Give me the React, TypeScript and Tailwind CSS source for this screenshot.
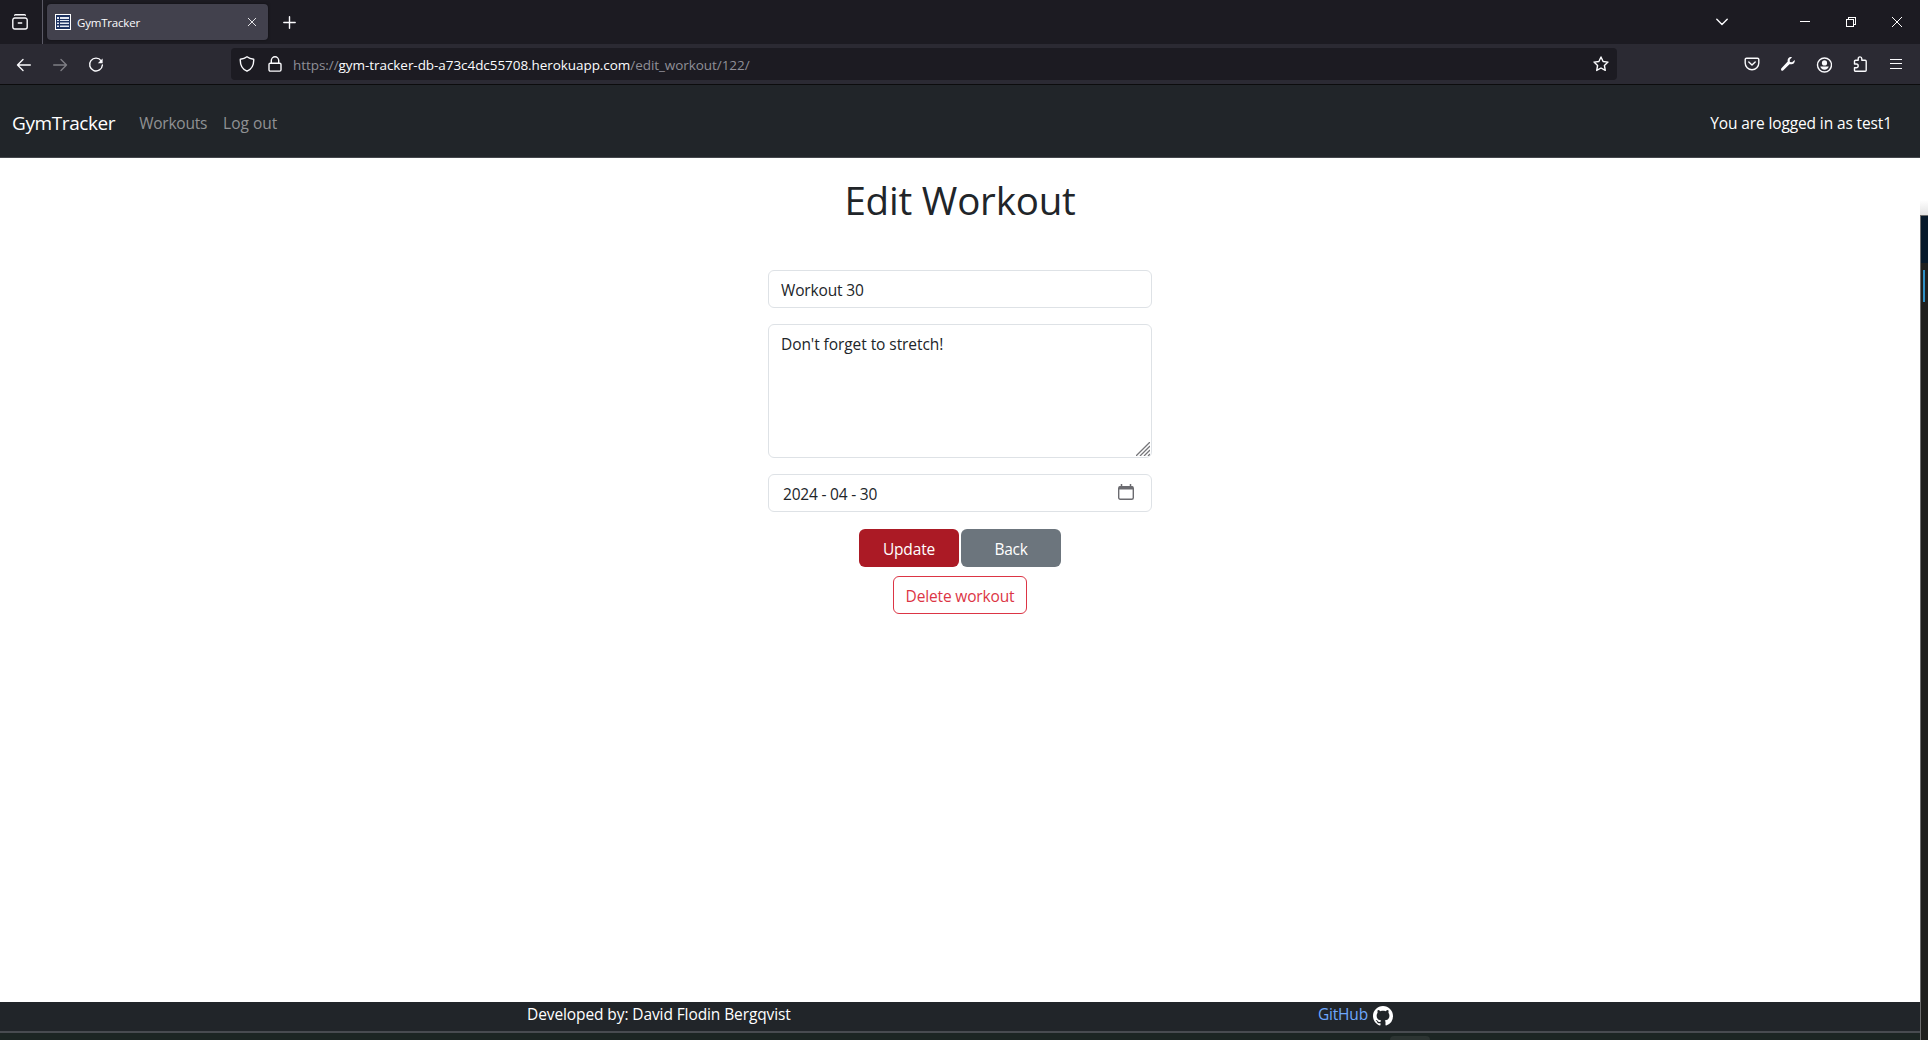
import React from "react";

const stroke = { fill: "none", stroke: "#fbfbfe", strokeWidth: 1.4, strokeLinecap: "round" as const, strokeLinejoin: "round" as const };

function Icon({ children, className = "", size = 16 }: { children: React.ReactNode; className?: string; size?: number }) {
  return (
    <svg width={size} height={size} viewBox="0 0 16 16" className={"block shrink-0 " + className} {...stroke}>
      {children}
    </svg>
  );
}

function TabBar() {
  return (
    <div className="flex h-11 bg-[#1c1b22]">
      <div className="flex w-[43px] items-center border-r border-[#5b5a66] pl-3">
        <Icon>
          <path d="M2.7 1.2Q3 .8 3.6.8h8.8q.6 0 .9.4" />
          <path d="M3 4h10a2 2 0 0 1 2.2 2v7a2 2 0 0 1-2 2H2.8a2 2 0 0 1-2-2V6A2 2 0 0 1 3 4zM6.3 9h3.4" />
        </Icon>
      </div>
      <div className="ml-1 mt-1 flex h-9 w-[221px] items-center rounded bg-[#42414d] pl-2 pr-2.5 shadow-[0_0_3px_rgba(0,0,0,0.5)]">
        <svg width="16" height="16" viewBox="0 0 16 16" className="block">
          <path d="M0 0h16v16H0z" fill="#fff" />
          <path d="M1 1h14v14H1z" fill="#1d3260" />
          <path d="M2 3h2v2H2zM2 6h2v1H2zM2 8.500h2v1.500H2zM2 11.500h2v1.500H2zM5 3h9v2H5zM5 6h9v1H5zM5 8.500h9v1.500H5zM5 11.500h9v1.500H5z" fill="#e3e8f2" />
        </svg>
        <span className="ml-1.5 pt-px text-[11.500px] tracking-[-0.2px] text-[#fbfbfe]">GymTracker</span>
        <Icon size={10} className="ml-auto mr-px"><path d="M2 2l12 12M14 2L2 14" /></Icon>
      </div>
      <div className="ml-[15px] flex items-center pt-px">
        <svg width="13" height="13" viewBox="0 0 13 13" {...stroke}><path d="M6.500.8v11.400M.8 6.500h11.400" /></svg>
      </div>
      <div className="ml-auto flex items-center pr-[18px]">
        <svg width="12" height="8" viewBox="0 0 12 8" className="mr-[72px]" {...stroke}><path d="M.8 1.200L6 6.400l5.200-5.200" /></svg>
        <svg width="10" height="10" viewBox="0 0 10 10" shapeRendering="crispEdges"><path d="M0 4h10v1H0z" fill="#fff" /></svg>
        <svg width="10" height="10" viewBox="0 0 10 10" className="ml-9" fill="none" stroke="#fff" shapeRendering="crispEdges"><path d="M.5 2.500h7v7h-7zM2.500 2.500v-2h7v7h-2" /></svg>
        <svg width="10" height="10" viewBox="0 0 10 10" className="ml-9" stroke="#fff"><path d="M0 0l10 10M10 0L0 10" /></svg>
      </div>
    </div>
  );
}

function Toolbar() {
  return (
    <div className="flex h-[41px] items-center border-b border-[#0c0c0d] bg-[#2b2a33]">
      <Icon className="ml-4 mt-px"><path d="M14.300 8H1.500M7 2.500L1.500 8L7 13.500" /></Icon>
      <Icon className="ml-5 mt-px opacity-40"><path d="M1.700 8h12.800M9 2.500L14.500 8L9 13.500" /></Icon>
      <Icon className="ml-5 mt-px">
        <path d="M13.200 3.800A6.400 6.400 0 1 0 14.400 8" />
        <path d="M14.600 1.500v4.800H9.800z" fill="#fbfbfe" stroke="none" />
      </Icon>
      <div className="ml-[127px] flex h-8 w-[1386px] items-center rounded bg-[#1c1b22]">
        <Icon className="ml-2"><path d="M8 .8C6 2.300 3.800 2.900 1.300 3.200C1 9 3.200 13.200 8 15.200C12.800 13.200 15 9 14.700 3.200C12.200 2.900 10 2.300 8 .8z" /></Icon>
        <Icon className="ml-3"><path d="M3.300 7.200h9.400a1.300 1.300 0 0 1 1.300 1.300v5.300a1.300 1.300 0 0 1-1.300 1.300H3.300A1.300 1.300 0 0 1 2 13.800V8.500a1.300 1.300 0 0 1 1.300-1.300zM4.300 7V4.500a3.700 3.700 0 0 1 7.400 0V7" /></Icon>
        <span className="ml-[10px] whitespace-nowrap pt-0.5 text-[13.500px] tracking-[-0.06px] text-[#8f8f97]">
          https://<span className="text-[#fbfbfe]">gym-tracker-db-a73c4dc55708.herokuapp.com</span>/edit_workout/122/
        </span>
        <Icon className="ml-auto mr-2"><path d="M8 1l2.100 4.500 4.900.6-3.600 3.400.9 4.900L8 12l-4.300 2.400.9-4.900L1 6.100l4.900-.6z" /></Icon>
      </div>
      <div className="ml-auto flex items-center gap-5 pr-4">
        <Icon><path d="M2.500 2.200h11a1.300 1.300 0 0 1 1.300 1.300V7a6.800 6.800 0 0 1-13.600 0V3.500a1.300 1.300 0 0 1 1.300-1.300zM4.800 6L8 9l3.200-3" /></Icon>
        <Icon><path d="M14.700 3.900l-2.600 2.300-2.200-.2-.2-2.300 2.300-2.500C9.500.5 7.100 2.400 7.700 5.600L1.200 12.600q-.5 1 .2 1.800.8.600 1.700 0L9.500 8.200c3.300.8 5.700-1.500 5.200-4.300z" fill="#fbfbfe" stroke="none" /></Icon>
        <Icon className="mt-px">
          <circle cx="8.500" cy="8" r="7" />
          <circle cx="8.500" cy="5.900" r="2.600" fill="#fbfbfe" stroke="none" />
          <path d="M4.300 9.600h8.400c-.4 2-2 3.200-4.200 3.200s-3.800-1.200-4.200-3.200z" fill="#fbfbfe" stroke="none" />
        </Icon>
        <Icon><path d="M2.500 8V5.200a1 1 0 0 1 1-1h2.700V2.700a1.800 1.800 0 0 1 3.600 0v1.500h3.400a1 1 0 0 1 1 1v9a1 1 0 0 1-1 1H3.500a1 1 0 0 1-1-1v-2.400h1.800a1.800 1.800 0 0 0 0-3.800z" /></Icon>
        <svg width="16" height="16" viewBox="0 0 16 16" shapeRendering="crispEdges" fill="#fbfbfe"><path d="M2 3h12v1H2zM2 7h12v1H2zM2 12h12v1H2z" /></svg>
      </div>
    </div>
  );
}

function SiteNav() {
  return (
    <nav className="flex h-[73px] items-center border-b border-[#44474c] bg-[#212529] pl-3 pr-7 pt-1 text-[15.500px]">
      <span className="text-[19px] tracking-[-0.4px] text-white">GymTracker</span>
      <span className="ml-6 pt-0.5 tracking-[-0.25px] text-[#909294]">Workouts</span>
      <span className="ml-4 pt-0.5 tracking-[0px] text-[#909294]">Log out</span>
      <span className="ml-auto pt-0.5 tracking-[-0.12px] text-white">You are logged in as test1</span>
    </nav>
  );
}

function EditForm() {
  return (
    <main className="flex flex-1 flex-col items-center bg-white text-[15.500px] text-[#212529]">
      <h1 className="mt-[18px] h-12 text-[38.500px] leading-[48px] tracking-[-0.2px]">Edit Workout</h1>
      <form className="mt-[46px] flex w-96 flex-col gap-4">
        <div className="flex h-[38px] items-center rounded-md border border-[#dee2e6] px-3 pt-1 tracking-[-0.15px]">Workout 30</div>
        <div className="relative h-[134px] rounded-md border border-[#dee2e6] px-3 pt-2 tracking-[-0.07px]">
          Don't forget to stretch!
          <svg width="14" height="14" viewBox="0 0 14 14" className="absolute bottom-px right-px" stroke="#76767a" strokeWidth="1.300"><path d="M0 14L14 0M4 14L14 4M8 14l6-6M12 14l2-2" /></svg>
        </div>
        <div className="flex h-[38px] items-center rounded-md border border-[#dee2e6] pl-3.5 pr-[17px]">
          <span className="pt-1 tracking-[-0.2px]">2024 - 04 - 30</span>
          <svg width="16" height="16" viewBox="0 0 16 16" className="mb-0.5 ml-auto" fill="none" stroke="#6b6b70"><rect x=".7" y="2.700" width="14.600" height="12.600" rx="1.500" strokeWidth="1.400" /><path d="M1 4h14" strokeWidth="3" /><path d="M3.500 0v3M12.500 0v3" strokeWidth="1.500" /></svg>
        </div>
      </form>
      <div className="mt-[17px] flex gap-0.5 text-white">
        <span className="flex h-[38px] w-[100px] items-center justify-center rounded-md bg-[#ab1a25] pt-1 tracking-[-0.15px]">Update</span>
        <span className="flex h-[38px] w-[100px] items-center justify-center rounded-md bg-[#6c757d] pt-1 tracking-[-0.25px]">Back</span>
      </div>
      <span className="mt-[9px] flex h-[38px] w-[134px] items-center justify-center rounded-md border border-[#dc3545] pt-1 tracking-[-0.15px] text-[#dc3545]">Delete workout</span>
    </main>
  );
}

function Footer() {
  return (
    <footer className="flex h-[29px] items-center bg-[#212529] text-[15.500px] text-white">
      <span className="ml-[527px] w-[791px] pb-1 tracking-[-0.1px]">Developed by: David Flodin Bergqvist</span>
      <span className="pb-1 tracking-[-0.2px] text-[#6ea8fe]">GitHub</span>
      <svg width="20" height="20" viewBox="0 0 16 16" className="mb-px ml-[5px]" fill="#fff">
        <path d="M8 0C3.580 0 0 3.580 0 8c0 3.540 2.290 6.530 5.470 7.590.4.070.55-.17.55-.38 0-.19-.01-.82-.01-1.490-2.010.37-2.530-.49-2.690-.94-.09-.23-.48-.94-.82-1.130-.28-.15-.68-.52-.01-.53.63-.01 1.080.58 1.230.82.72 1.210 1.870.87 2.330.66.07-.52.28-.87.51-1.070-1.780-.2-3.640-.89-3.640-3.950 0-.87.31-1.590.82-2.150-.08-.2-.36-1.020.08-2.120 0 0 .67-.21 2.200.82.64-.18 1.320-.27 2-.27s1.360.09 2 .27c1.530-1.040 2.200-.82 2.200-.82.44 1.100.16 1.920.08 2.120.51.56.82 1.270.82 2.150 0 3.070-1.870 3.750-3.650 3.950.29.25.54.73.54 1.480 0 1.070-.01 1.930-.01 2.200 0 .21.150.46.550.38A8.010 8.010 0 0 0 16 8c0-4.420-3.580-8-8-8z" />
      </svg>
    </footer>
  );
}

export default function App() {
  return (
    <div className="flex h-[1040px] w-[1928px] overflow-hidden bg-white font-['Open_Sans','Noto_Sans',sans-serif]">
      <div className="flex w-[1920px] shrink-0 flex-col">
        <TabBar />
        <Toolbar />
        <SiteNav />
        <EditForm />
        <Footer />
        <div className="h-[9px] overflow-hidden border-t-2 border-[#484b50] bg-[#1c2523] pt-[3px]">
          <div className="ml-[1390px] h-2 w-10 rounded-t bg-[#2c3432]" />
        </div>
      </div>
      <div className="flex w-2 flex-col">
        <div className="h-[215px] bg-[linear-gradient(#fff_200px,#e3e3e3_215px)]" />
        <div className="h-12 border-l border-t border-[#6c6c6c] bg-[#07192a]" />
        <div className="flex-1 border-l border-[#6c6c6c] bg-[#1f1f1d] pl-0.5 pt-[7px]">
          <div className="h-8 w-0.5 bg-[#2f8fc4]" />
        </div>
      </div>
    </div>
  );
}
